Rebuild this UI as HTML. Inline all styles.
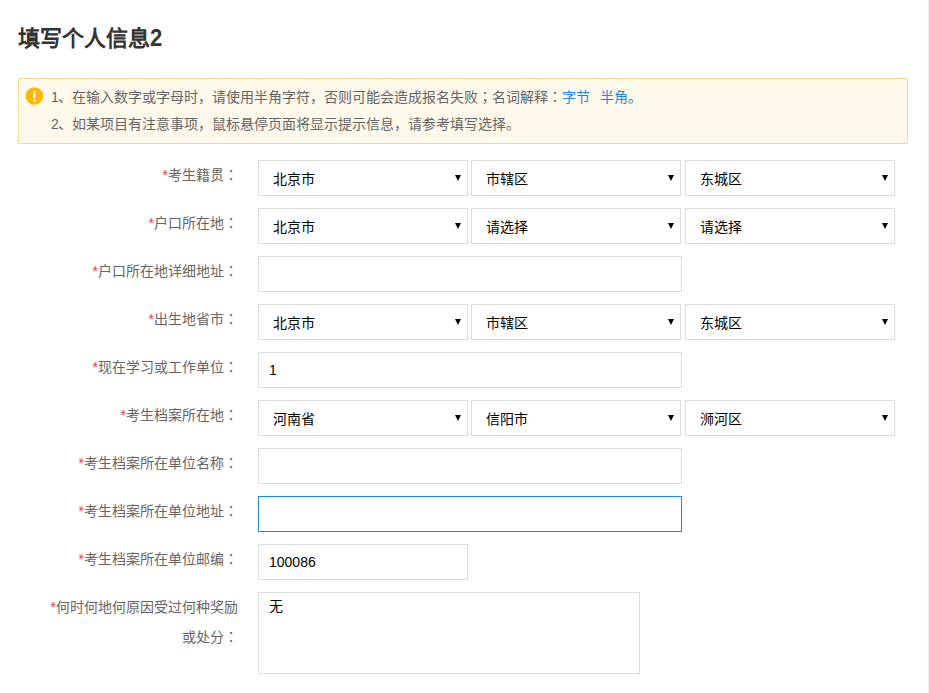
<!DOCTYPE html>
<html lang="zh-CN">
<head>
<meta charset="utf-8">
<title>填写个人信息2</title>
<style>
html,body{margin:0;padding:0;}
body{width:929px;height:693px;overflow:hidden;position:relative;background:#fff;
  font-family:"Liberation Sans",sans-serif;font-size:14px;color:#666;}
.edge1{position:absolute;left:927px;top:0;width:1px;height:693px;background:#fbfbfb;}
.edge2{position:absolute;left:928px;top:0;width:1px;height:693px;background:#efefef;}
h1{position:absolute;left:18px;top:22px;margin:0;font-size:22px;line-height:32px;font-weight:bold;color:#333;white-space:nowrap;}
h1 span{display:inline-block;font-size:24px;line-height:32px;transform:scaleX(.92);transform-origin:0 50%;}
.tip{position:absolute;left:18px;top:78px;width:888px;height:64px;border:1px solid #f6d98e;border-radius:2px;background:#fff9ec;}
.tip svg{position:absolute;left:7px;top:8px;}
.tip p{position:absolute;left:32px;margin:0;line-height:27px;height:27px;white-space:nowrap;color:#666;font-size:14px;}
.tip p.l1{top:5px;}
.tip p.l2{top:32px;}
.tip b{display:inline-block;font-weight:normal;width:7px;}
.tip a{color:#1e88e5;text-decoration:none;}
.tip a.m{margin-left:10px;}
.row{position:absolute;left:0;width:929px;height:36px;}
.row label{position:absolute;left:38px;top:0;width:200px;text-align:right;line-height:30px;color:#666;font-size:14px;}
.row label i{font-style:normal;color:#e8383d;}
.sel,.inp,.ta{position:absolute;top:0;box-sizing:border-box;height:36px;border:1px solid #ddd;background:#fff;color:#000;font-size:14px;}
.sel{width:210px;padding-left:13.5px;line-height:36px;}
.sel svg{position:absolute;right:6px;top:14px;}
.s1{left:258px;}
.s2{left:471px;padding-left:14.4px;}
.s3{left:685px;padding-left:14px;}
.inp{left:258px;width:424px;padding-left:10px;line-height:34px;}
.inp.short{width:210px;}
.inp.focus{border-color:#1e88e5;}
.ta{left:258px;width:382px;height:82px;padding:4px 10px;line-height:19px;}
</style>
</head>
<body>
<div class="edge1"></div><div class="edge2"></div>
<h1>填写个人信息<span>2</span></h1>

<div class="tip">
  <svg width="18" height="18" viewBox="0 0 18 18"><circle cx="8.5" cy="9" r="8.8" fill="#ffb800"/><rect x="7.5" y="4" width="2" height="7.2" rx="0.8" fill="#fff"/><circle cx="8.5" cy="13.6" r="1.25" fill="#fff"/></svg>
  <p class="l1"><b>1</b>、在输入数字或字母时，请使用半角字符，否则可能会造成报名失败<span lang="zh-TW">；</span>名词解释<span lang="zh-TW">：</span><a>字节</a><a class="m">半角</a>。</p>
  <p class="l2"><b>2</b>、如某项目有注意事项，鼠标悬停页面将显示提示信息，请参考填写选择。</p>
</div>

<div class="row" style="top:160px">
  <label><i>*</i>考生籍贯<span lang="zh-TW">：</span></label>
  <div class="sel s1">北京市<svg width="6" height="6" viewBox="0 0 6 6"><path d="M0 0h6L3 6z" fill="#000"/></svg></div>
  <div class="sel s2">市辖区<svg width="6" height="6" viewBox="0 0 6 6"><path d="M0 0h6L3 6z" fill="#000"/></svg></div>
  <div class="sel s3">东城区<svg width="6" height="6" viewBox="0 0 6 6"><path d="M0 0h6L3 6z" fill="#000"/></svg></div>
</div>

<div class="row" style="top:208px">
  <label><i>*</i>户口所在地<span lang="zh-TW">：</span></label>
  <div class="sel s1">北京市<svg width="6" height="6" viewBox="0 0 6 6"><path d="M0 0h6L3 6z" fill="#000"/></svg></div>
  <div class="sel s2">请选择<svg width="6" height="6" viewBox="0 0 6 6"><path d="M0 0h6L3 6z" fill="#000"/></svg></div>
  <div class="sel s3">请选择<svg width="6" height="6" viewBox="0 0 6 6"><path d="M0 0h6L3 6z" fill="#000"/></svg></div>
</div>

<div class="row" style="top:256px">
  <label><i>*</i>户口所在地详细地址<span lang="zh-TW">：</span></label>
  <div class="inp"></div>
</div>

<div class="row" style="top:304px">
  <label><i>*</i>出生地省市<span lang="zh-TW">：</span></label>
  <div class="sel s1">北京市<svg width="6" height="6" viewBox="0 0 6 6"><path d="M0 0h6L3 6z" fill="#000"/></svg></div>
  <div class="sel s2">市辖区<svg width="6" height="6" viewBox="0 0 6 6"><path d="M0 0h6L3 6z" fill="#000"/></svg></div>
  <div class="sel s3">东城区<svg width="6" height="6" viewBox="0 0 6 6"><path d="M0 0h6L3 6z" fill="#000"/></svg></div>
</div>

<div class="row" style="top:352px">
  <label><i>*</i>现在学习或工作单位<span lang="zh-TW">：</span></label>
  <div class="inp">1</div>
</div>

<div class="row" style="top:400px">
  <label><i>*</i>考生档案所在地<span lang="zh-TW">：</span></label>
  <div class="sel s1">河南省<svg width="6" height="6" viewBox="0 0 6 6"><path d="M0 0h6L3 6z" fill="#000"/></svg></div>
  <div class="sel s2">信阳市<svg width="6" height="6" viewBox="0 0 6 6"><path d="M0 0h6L3 6z" fill="#000"/></svg></div>
  <div class="sel s3">浉河区<svg width="6" height="6" viewBox="0 0 6 6"><path d="M0 0h6L3 6z" fill="#000"/></svg></div>
</div>

<div class="row" style="top:448px">
  <label><i>*</i>考生档案所在单位名称<span lang="zh-TW">：</span></label>
  <div class="inp"></div>
</div>

<div class="row" style="top:496px">
  <label><i>*</i>考生档案所在单位地址<span lang="zh-TW">：</span></label>
  <div class="inp focus"></div>
</div>

<div class="row" style="top:544px">
  <label><i>*</i>考生档案所在单位邮编<span lang="zh-TW">：</span></label>
  <div class="inp short">100086</div>
</div>

<div class="row" style="top:592px;height:82px">
  <label><i>*</i>何时何地何原因受过何种奖励或处分<span lang="zh-TW">：</span></label>
  <div class="ta">无</div>
</div>

</body>
</html>
